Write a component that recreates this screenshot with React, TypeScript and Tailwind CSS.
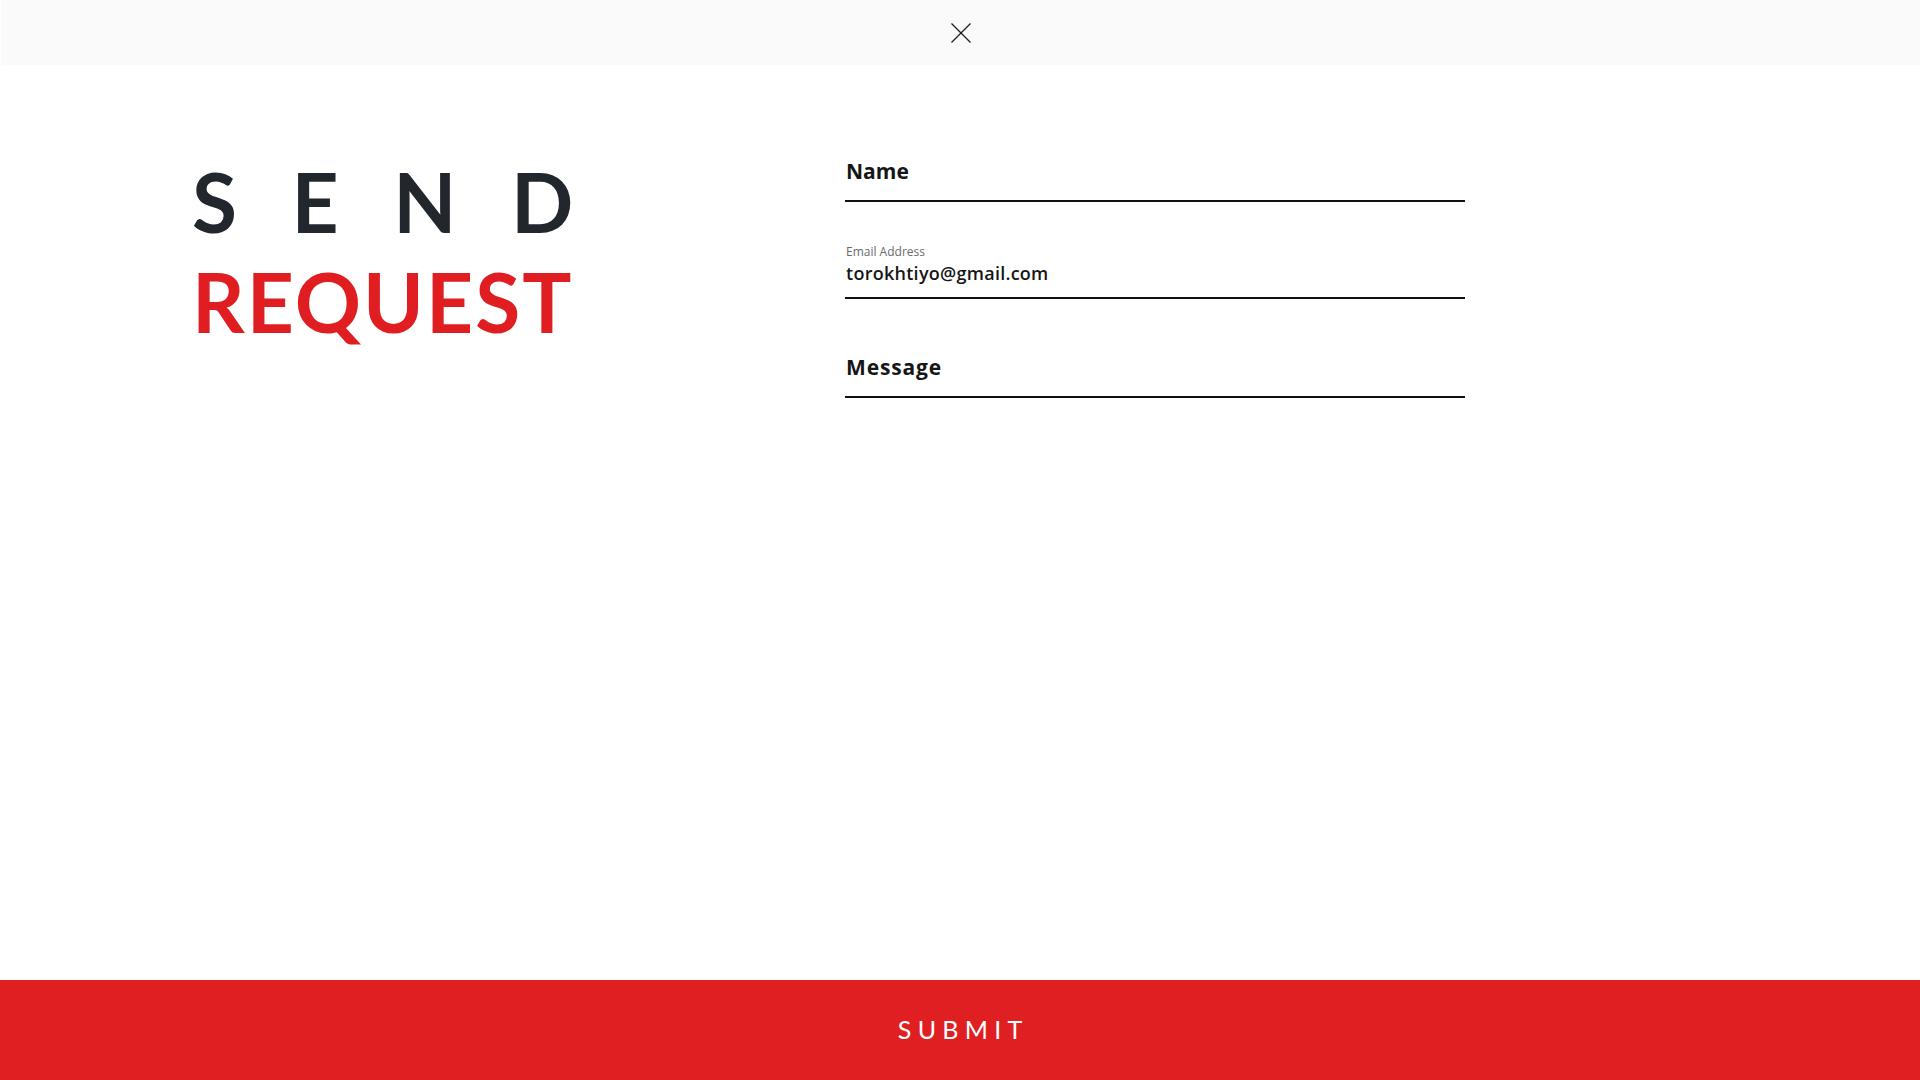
import { useState } from "react"

const font = { fontFamily: "Lato, 'Open Sans', sans-serif" }
const formFont = { fontFamily: "'Open Sans', Lato, sans-serif" }

function CloseIcon() {
  return (
    <svg width="20" height="20" viewBox="0 0 20 20" fill="none" stroke="#1f1f1f" strokeWidth="1.2">
      <line x1="0.5" y1="0.5" x2="19.5" y2="19.5" />
      <line x1="19.5" y1="0.5" x2="0.5" y2="19.5" />
    </svg>
  )
}

export default function App() {
  const [email] = useState("torokhtiyo@gmail.com")

  return (
    <div className="min-h-screen flex flex-col bg-white" style={font}>
      {/* top bar */}
      <div className="h-[65px] ml-px bg-[#fafafa] flex items-center justify-center">
        <button type="button" aria-label="Close" className="flex">
          <CloseIcon />
        </button>
      </div>

      <div className="flex-1 flex pl-[192px]">
        {/* heading */}
        <div className="w-[653px] shrink-0 pt-[86px]">
          <div className="inline-flex flex-col font-bold text-[82px] leading-[100px]">
            <div className="flex justify-between text-[#22272e]">
              <span>S</span>
              <span>E</span>
              <span>N</span>
              <span>D</span>
            </div>
            <div className="text-[#e01e22] tracking-[0.025em]">REQUEST</div>
          </div>
        </div>

        {/* form */}
        <form className="w-[620px] pt-[65px] flex flex-col text-[#161616]" style={formFont}>
          <div className="h-[72px] flex flex-col justify-end border-b-2 border-[#111] pb-[17px] pl-px">
            <span className="text-[21px] leading-[24px] font-bold">Name</span>
          </div>
          <div className="h-[97px] flex flex-col justify-end border-b-2 border-[#111] pb-[13px] pl-px">
            <span className="text-[12px] leading-[14px] text-[#6b6b6b] mb-[3px]">Email Address</span>
            <span className="text-[18px] leading-[22px] font-semibold tracking-[0.015em]">{email}</span>
          </div>
          <div className="h-[99px] flex flex-col justify-end border-b-2 border-[#111] pb-[17px] pl-px">
            <span className="text-[21px] leading-[24px] font-bold tracking-[0.04em]">Message</span>
          </div>
        </form>
      </div>

      {/* submit */}
      <button
        type="button"
        className="h-[100px] w-full bg-[#df1f21] text-white text-[25px] tracking-[0.25em] pl-[0.25em] flex items-center justify-center"
      >
        SUBMIT
      </button>
    </div>
  )
}
